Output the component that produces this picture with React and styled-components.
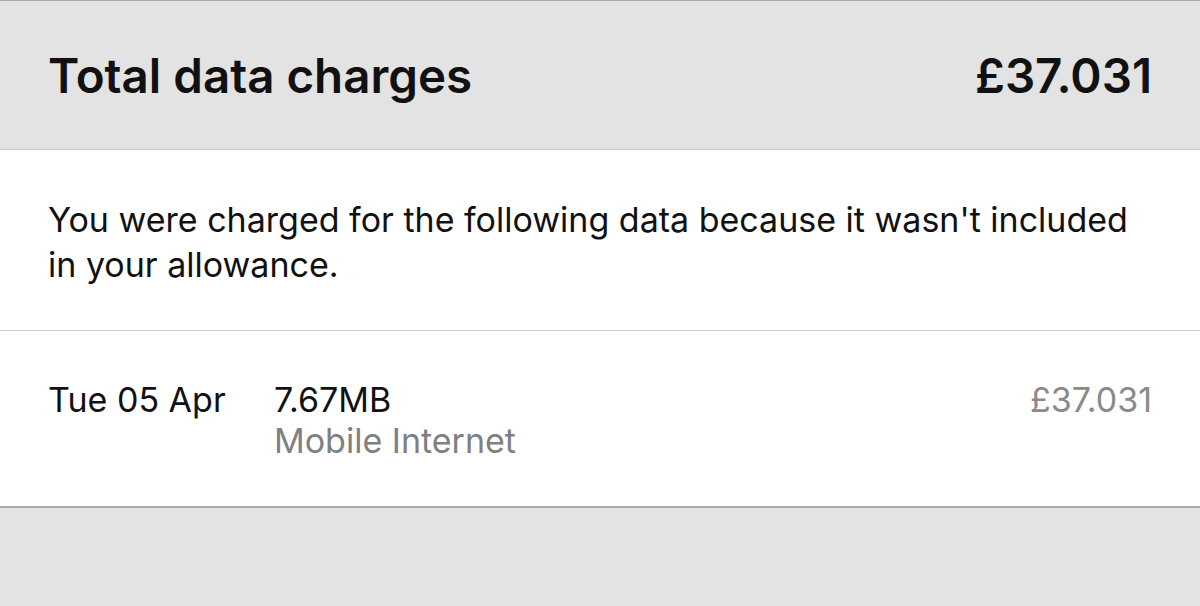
import React from 'react'
import styled, { createGlobalStyle } from 'styled-components'

const GlobalStyle = createGlobalStyle`
  html, body {
    margin: 0;
    padding: 0;
    background: #e3e3e3;
    font-family: 'Inter', 'Liberation Sans', sans-serif;
    -webkit-font-smoothing: antialiased;
  }
`

const Page = styled.div`
  width: 1200px;
  height: 606px;
  background: #e3e3e3;
  border-top: 1px solid #a8a8a8;
  box-sizing: border-box;
  overflow: hidden;
`

const Header = styled.div`
  height: 149px;
  display: flex;
  align-items: center;
  justify-content: space-between;
  padding: 0 48px;
  border-bottom: 1px solid #c9c9c9;
  box-sizing: border-box;
`

const Title = styled.h1`
  margin: 0;
  font-size: 47.5px;
  font-weight: 600;
  color: #111;
`

const Total = styled.div`
  font-size: 47.5px;
  font-weight: 600;
  color: #111;
`

const Section = styled.div`
  background: #fff;
  border-bottom: ${(p) => (p.last ? '2px solid #a9a9a9' : '1px solid #cfcfcf')};
  box-sizing: border-box;
  height: ${(p) => p.h}px;
`

const Note = styled.p`
  margin: 0;
  padding: 47px 48px 0;
  font-size: 34px;
  line-height: 45px;
  color: #111;
`

const Row = styled.div`
  display: flex;
  align-items: flex-start;
  padding: 48px 48px 0;
`

const DateCell = styled.div`
  width: 226px;
  font-size: 34px;
  line-height: 41px;
  color: #111;
`

const Usage = styled.div`
  flex: 1;
  display: flex;
  flex-direction: column;
`

const Amount = styled.div`
  font-size: 34px;
  line-height: 41px;
  color: #111;
`

const Kind = styled.div`
  font-size: 34px;
  line-height: 41px;
  color: #808080;
`

const Price = styled.div`
  font-size: 34px;
  line-height: 41px;
  color: #8a8a8a;
`

export default function App() {
  return (
    <>
      <GlobalStyle />
      <Page>
        <Header>
          <Title>Total data charges</Title>
          <Total>£37.031</Total>
        </Header>
        <Section h={181}>
          <Note>
            You were charged for the following data because it wasn't included
            in your allowance.
          </Note>
        </Section>
        <Section h={177} last>
          <Row>
            <DateCell>Tue 05 Apr</DateCell>
            <Usage>
              <Amount>7.67MB</Amount>
              <Kind>Mobile Internet</Kind>
            </Usage>
            <Price>£37.031</Price>
          </Row>
        </Section>
      </Page>
    </>
  )
}
